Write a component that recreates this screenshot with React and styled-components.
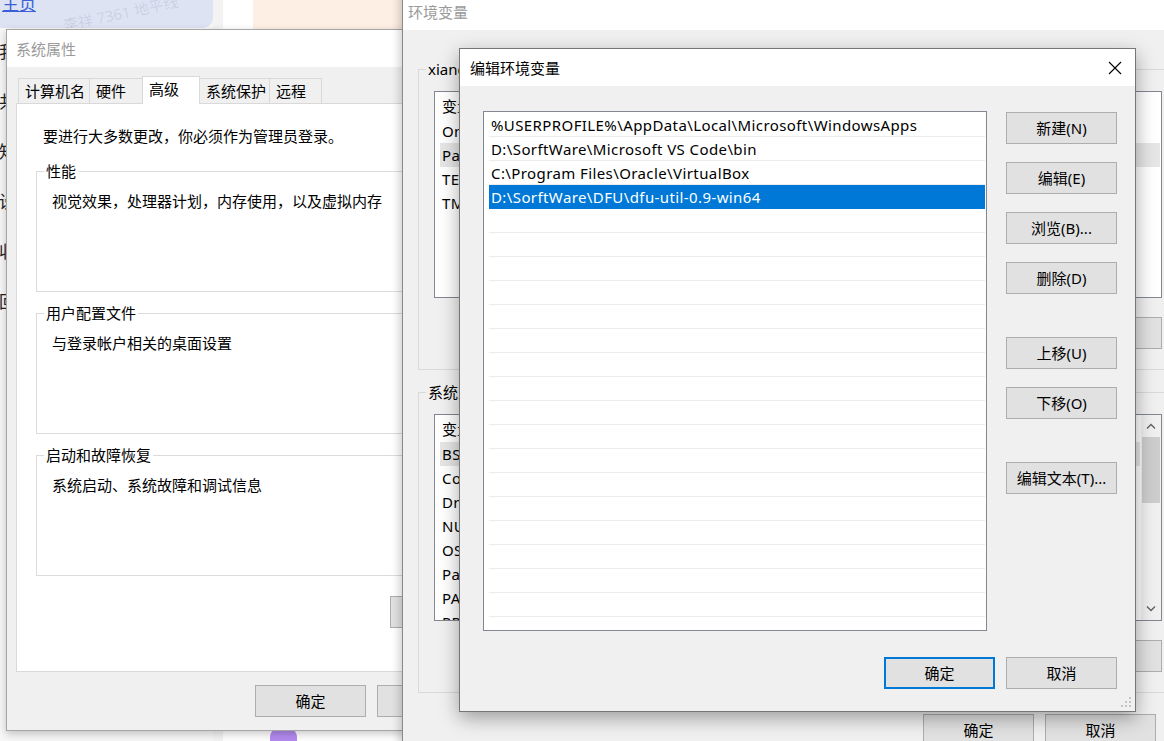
import React from 'react';
import styled, { createGlobalStyle } from 'styled-components';

const FONT = `"Segoe UI", "Noto Sans", "Noto Sans CJK SC", sans-serif`;

const GlobalStyle = createGlobalStyle`
  * { box-sizing: border-box; }
  html, body { margin: 0; padding: 0; overflow: hidden; background: #ffffff; }
  body { font-family: ${FONT}; font-size: 15px; color: #000; }
  #root { width: 1164px; height: 741px; }
`;

const Desktop = styled.div`
  position: relative;
  width: 1164px;
  height: 741px;
  overflow: hidden;
  background: #fff;
`;

/* ---------- background web page ---------- */
const BackPage = styled.div`
  display: flex;
  width: 100%;
  height: 100%;
`;
const SideColumn = styled.div`
  width: 213px;
  flex: none;
  display: flex;
  flex-direction: column;
  background: #f7f7f7;
`;
const HomeTab = styled.div`
  position: relative;
  height: 28px;
  flex: none;
  background: #dde3f2;
  border-bottom-right-radius: 10px;
  display: flex;
  align-items: flex-start;
  padding-left: 2px;
  overflow: hidden;
`;
const HomeLink = styled.span`
  color: #3a5fd6;
  font-size: 17px;
  line-height: 20px;
  margin-top: -6px;
  text-decoration: underline;
`;
const Watermark = styled.span`
  position: absolute;
  left: 62px;
  top: 2px;
  transform: rotate(-12deg);
  color: rgba(60, 70, 110, 0.12);
  font-size: 15px;
  white-space: nowrap;
`;
const SideNav = styled.div`
  display: flex;
  flex-direction: column;
  padding-top: 14px;
`;
const SideItem = styled.div`
  height: 50px;
  font-size: 17px;
  line-height: 20px;
  margin-left: -1px;
  color: #222;
`;
const Gutter = styled.div`
  width: ${(p) => p.$w}px;
  flex: none;
  background: ${(p) => p.$bg};
`;
const MainArea = styled.div`
  flex: 1;
  display: flex;
  flex-direction: column;
  background: #fff;
`;
const PeachCard = styled.div`
  height: 700px;
  background: #fdefe4;
`;
const Blob = styled.div`
  width: 27px;
  height: 12px;
  margin: 37px 0 0 17px;
  border-radius: 8px 8px 0 0;
  background: #b38af0;
`;

/* ---------- windows ---------- */
const Window = styled.div`
  position: absolute;
  left: ${(p) => p.$x}px;
  top: ${(p) => p.$y}px;
  width: ${(p) => p.$w}px;
  height: ${(p) => p.$h}px;
  display: flex;
  flex-direction: column;
  background: #f0f0f0;
  border: 1px solid ${(p) => p.$border};
  box-shadow: ${(p) => p.$shadow};
`;
const TitleBar = styled.div`
  height: 37px;
  flex: none;
  background: #fff;
  display: flex;
  align-items: center;
  justify-content: space-between;
  padding-left: ${(p) => p.$pad}px;
  color: ${(p) => (p.$active ? '#000' : '#9a9a9a')};
  font-size: 15px;
  line-height: 20px;
`;
const CloseButton = styled.div`
  width: 40px;
  height: 37px;
  display: flex;
  align-items: center;
  justify-content: center;
`;

const Button = styled.div`
  width: ${(p) => p.$w || 111}px;
  height: 32px;
  flex: none;
  margin-top: ${(p) => p.$gap || 0}px;
  display: flex;
  align-items: center;
  justify-content: center;
  background: #e1e1e1;
  border: ${(p) => (p.$default ? '2px solid #0078d7' : '1px solid #adadad')};
  font-size: 15px;
  line-height: 20px;
  white-space: nowrap;
  overflow: hidden;
`;
const ButtonRow = styled.div`
  display: flex;
  justify-content: flex-end;
  gap: 11px;
  margin-top: ${(p) => p.$top || 0}px;
  padding-right: ${(p) => p.$right || 0}px;
`;

/* ---------- system properties ---------- */
const SysBody = styled.div`
  flex: 1;
  display: flex;
  flex-direction: column;
  padding: 12px 9px 0 9px;
`;
const TabStrip = styled.div`
  display: flex;
  align-items: flex-end;
  height: 25px;
  padding-left: 2px;
  margin-bottom: -1px;
  position: relative;
  z-index: 1;
`;
const Tab = styled.div`
  width: ${(p) => p.$w}px;
  height: ${(p) => (p.$active ? 28 : 26)}px;
  margin-right: -1px;
  padding-left: 6px;
  padding-bottom: ${(p) => (p.$active ? 3 : 0)}px;
  display: flex;
  align-items: center;
  background: ${(p) => (p.$active ? '#fff' : '#f0f0f0')};
  border: 1px solid #d9d9d9;
  border-bottom: ${(p) => (p.$active ? 'none' : '1px solid #d9d9d9')};
  position: relative;
  z-index: ${(p) => (p.$active ? 2 : 1)};
  font-size: 15px;
  line-height: 20px;
  white-space: nowrap;
`;
const TabPanel = styled.div`
  height: 569px;
  flex: none;
  background: #fff;
  border: 1px solid #d9d9d9;
  padding: 22px 14px 0 19px;
  display: flex;
  flex-direction: column;
`;
const Notice = styled.div`
  margin-left: 7px;
  line-height: 20px;
`;
const GroupBox = styled.fieldset`
  margin: ${(p) => p.$top}px 0 0 0;
  padding: 0;
  min-width: 0;
  border: 1px solid ${(p) => p.$line || '#dcdcdc'};
`;
const GroupLabel = styled.legend`
  margin-left: 7px;
  padding: 0 2px;
  line-height: 20px;
  font-size: 15px;
  white-space: nowrap;
`;
const GroupContent = styled.div`
  height: 110px;
  padding: 10px 0 0 15px;
  line-height: 20px;
`;

/* ---------- environment variables ---------- */
const EnvBody = styled.div`
  flex: 1;
  display: flex;
  flex-direction: column;
  padding: 29px 15px 0 15px;
`;
const EnvGroupContent = styled.div`
  padding: 12px 15px 20px 15px;
  display: flex;
  flex-direction: column;
`;
const VarList = styled.div`
  height: 207px;
  background: #fff;
  border: 1px solid #828790;
  display: flex;
  overflow: hidden;
`;
const VarRows = styled.div`
  flex: 1;
  display: flex;
  flex-direction: column;
  overflow: hidden;
`;
const VarHeader = styled.div`
  height: 27px;
  flex: none;
  display: flex;
  align-items: center;
  padding-left: 7px;
  line-height: 20px;
`;
const VarRow = styled.div`
  height: 24px;
  flex: none;
  margin: 0 1px 0 5px;
  padding-left: 2px;
  display: flex;
  align-items: center;
  background: ${(p) => (p.$selected ? '#e6e6e6' : 'transparent')};
  line-height: 20px;
  letter-spacing: 0.4px;
  white-space: nowrap;
`;
const NameCell = styled.span`
  width: 230px;
  flex: none;
`;
const Scrollbar = styled.div`
  width: 20px;
  flex: none;
  background: #f0f0f0;
  display: flex;
  flex-direction: column;
  align-items: center;
`;
const ScrollArrow = styled.div`
  height: 22px;
  width: 100%;
  flex: none;
  display: flex;
  align-items: center;
  justify-content: center;
`;
const ScrollTrack = styled.div`
  flex: 1;
  width: 100%;
  padding: 0 1px;
`;
const ScrollThumb = styled.div`
  height: 66px;
  background: #cdcdcd;
`;

/* ---------- edit dialog ---------- */
const EditBody = styled.div`
  flex: 1;
  display: grid;
  grid-template-columns: 504px 111px;
  grid-template-rows: 520px auto;
  column-gap: 19px;
  padding: 25px 18px 0 23px;
`;
const PathList = styled.div`
  background: #fff;
  border: 1px solid #828790;
  padding-top: 1px;
  overflow: hidden;
  display: flex;
  flex-direction: column;
`;
const PathRow = styled.div`
  height: 24px;
  flex: none;
  margin: 0 1px 0 5px;
  padding-left: 2px;
  display: flex;
  align-items: center;
  border-bottom: 1px solid ${(p) => (p.$selected ? '#0078d7' : '#ececec')};
  background: ${(p) => (p.$selected ? '#0078d7' : '#fff')};
  color: ${(p) => (p.$selected ? '#fff' : '#000')};
  line-height: 20px;
  letter-spacing: 0.4px;
  white-space: nowrap;
`;
const SideButtons = styled.div`
  display: flex;
  flex-direction: column;
  padding-top: 1px;
`;
const EditFooter = styled(ButtonRow)`
  grid-column: 1 / -1;
`;
const Grip = styled.svg`
  position: absolute;
  right: 3px;
  bottom: 3px;
`;

const paths = [
  '%USERPROFILE%\\AppData\\Local\\Microsoft\\WindowsApps',
  'D:\\SorftWare\\Microsoft VS Code\\bin',
  'C:\\Program Files\\Oracle\\VirtualBox',
  'D:\\SorftWare\\DFU\\dfu-util-0.9-win64',
];
const userVars = [
  ['OneDrive', 'C:\\Users\\xiang\\OneDrive'],
  ['Path', 'C:\\Users\\xiang\\AppData\\Local\\Microsoft\\WindowsApps;'],
  ['TEMP', '%USERPROFILE%\\AppData\\Local\\Temp'],
  ['TMP', '%USERPROFILE%\\AppData\\Local\\Temp'],
];
const sysVars = [
  ['BSP_ROOT', 'D:\\SorftWare\\BSP'],
  ['ComSpec', 'C:\\Windows\\system32\\cmd.exe'],
  ['DriverData', 'C:\\Windows\\System32\\Drivers\\DriverData'],
  ['NUMBER_OF_PROCESSORS', '8'],
  ['OS', 'Windows_NT'],
  ['Path', 'C:\\Windows\\system32;C:\\Windows;'],
  ['PATHEXT', '.COM;.EXE;.BAT;.CMD;.VBS;.VBE;.JS'],
  ['PROCESSOR_ARCHITECTURE', 'AMD64'],
];

const Chevron = ({ up }) => (
  <svg width="10" height="6" viewBox="0 0 10 6">
    <path d={up ? 'M1 5.5 L5 1.5 L9 5.5' : 'M1 0.5 L5 4.5 L9 0.5'} fill="none" stroke="#606060" strokeWidth="1.3" />
  </svg>
);

const VarTable = ({ rows, selected, scroll }) => (
  <VarList>
    <VarRows>
      <VarHeader>
        <NameCell>变量</NameCell>
        <span>值</span>
      </VarHeader>
      {rows.map(([n, v], i) => (
        <VarRow key={n} $selected={i === selected}>
          <NameCell>{n}</NameCell>
          <span>{v}</span>
        </VarRow>
      ))}
    </VarRows>
    {scroll && (
      <Scrollbar>
        <ScrollArrow><Chevron up /></ScrollArrow>
        <ScrollTrack><ScrollThumb /></ScrollTrack>
        <ScrollArrow><Chevron /></ScrollArrow>
      </Scrollbar>
    )}
  </VarList>
);

export default function App() {
  const pathRows = Array.from({ length: 22 }, (_, i) => paths[i] || '');
  return (
    <>
      <GlobalStyle />
      <Desktop>
        <BackPage>
          <SideColumn>
            <HomeTab>
              <HomeLink>主页</HomeLink>
              <Watermark>李祥 7361 地平线</Watermark>
            </HomeTab>
            <SideNav>
              {['我的', '共享', '知识库', '设置', '收藏', '回收站'].map((t) => (
                <SideItem key={t}>{t}</SideItem>
              ))}
            </SideNav>
          </SideColumn>
          <Gutter $w={10} $bg="#f3f3f3" />
          <Gutter $w={30} $bg="#ffffff" />
          <MainArea>
            <PeachCard />
            <Blob />
          </MainArea>
        </BackPage>

        {/* 系统属性 */}
        <Window $x={6} $y={29} $w={614} $h={702} $border="#a6a6a6" $shadow="0 3px 8px rgba(0,0,0,0.22)">
          <TitleBar $pad={9}>系统属性</TitleBar>
          <SysBody>
            <TabStrip>
              <Tab $w={72}>计算机名</Tab>
              <Tab $w={54}>硬件</Tab>
              <Tab $w={58} $active>高级</Tab>
              <Tab $w={71}>系统保护</Tab>
              <Tab $w={53}>远程</Tab>
            </TabStrip>
            <TabPanel>
              <Notice>要进行大多数更改，你必须作为管理员登录。</Notice>
              <GroupBox $top={15}>
                <GroupLabel>性能</GroupLabel>
                <GroupContent>视觉效果，处理器计划，内存使用，以及虚拟内存</GroupContent>
              </GroupBox>
              <GroupBox $top={11}>
                <GroupLabel>用户配置文件</GroupLabel>
                <GroupContent>与登录帐户相关的桌面设置</GroupContent>
              </GroupBox>
              <GroupBox $top={11}>
                <GroupLabel>启动和故障恢复</GroupLabel>
                <GroupContent>系统启动、系统故障和调试信息</GroupContent>
              </GroupBox>
              <ButtonRow $top={20}>
                <Button $w={205}>环境变量(N)...</Button>
              </ButtonRow>
            </TabPanel>
            <ButtonRow $top={13}>
              <Button>确定</Button>
              <Button>取消</Button>
              <Button>应用(A)</Button>
            </ButtonRow>
          </SysBody>
        </Window>

        {/* 环境变量 */}
        <Window $x={402} $y={-8} $w={792} $h={770} $border="#8a8a8a" $shadow="-3px 0 8px rgba(0,0,0,0.18)">
          <TitleBar $pad={5}>环境变量</TitleBar>
          <EnvBody>
            <GroupBox $top={0} $line="#d9d9d9">
              <GroupLabel>xiang 的用户变量(U)</GroupLabel>
              <EnvGroupContent>
                <VarTable rows={userVars} selected={1} />
                <ButtonRow $top={19}>
                  <Button>新建(N)...</Button>
                  <Button>编辑(E)...</Button>
                  <Button>删除(D)</Button>
                </ButtonRow>
              </EnvGroupContent>
            </GroupBox>
            <GroupBox $top={12} $line="#d9d9d9">
              <GroupLabel>系统变量(S)</GroupLabel>
              <EnvGroupContent>
                <VarTable rows={sysVars} selected={0} scroll />
                <ButtonRow $top={19}>
                  <Button>新建(W)...</Button>
                  <Button>编辑(I)...</Button>
                  <Button>删除(L)</Button>
                </ButtonRow>
              </EnvGroupContent>
            </GroupBox>
            <ButtonRow $top={21} $right={22}>
              <Button>确定</Button>
              <Button>取消</Button>
            </ButtonRow>
          </EnvBody>
        </Window>

        {/* 编辑环境变量 */}
        <Window $x={459} $y={48} $w={677} $h={664} $border="#767676" $shadow="0 6px 18px rgba(0,0,0,0.35)">
          <TitleBar $pad={10} $active>
            <span>编辑环境变量</span>
            <CloseButton>
              <svg width="14" height="14" viewBox="0 0 14 14">
                <path d="M1 1 L13 13 M13 1 L1 13" stroke="#000" strokeWidth="1.1" fill="none" />
              </svg>
            </CloseButton>
          </TitleBar>
          <EditBody>
            <PathList>
              {pathRows.map((p, i) => (
                <PathRow key={i} $selected={i === 3}>{p}</PathRow>
              ))}
            </PathList>
            <SideButtons>
              <Button>新建(N)</Button>
              <Button $gap={18}>编辑(E)</Button>
              <Button $gap={18}>浏览(B)...</Button>
              <Button $gap={18}>删除(D)</Button>
              <Button $gap={43}>上移(U)</Button>
              <Button $gap={18}>下移(O)</Button>
              <Button $gap={43}>编辑文本(T)...</Button>
            </SideButtons>
            <EditFooter $top={26}>
              <Button $default>确定</Button>
              <Button>取消</Button>
            </EditFooter>
          </EditBody>
          <Grip width="12" height="12" viewBox="0 0 12 12">
            {[[8, 0], [8, 4], [4, 4], [8, 8], [4, 8], [0, 8]].map(([x, y]) => (
              <rect key={`${x}-${y}`} x={x + 1} y={y + 1} width="2" height="2" fill="#c4c4c4" />
            ))}
          </Grip>
        </Window>
      </Desktop>
    </>
  );
}
